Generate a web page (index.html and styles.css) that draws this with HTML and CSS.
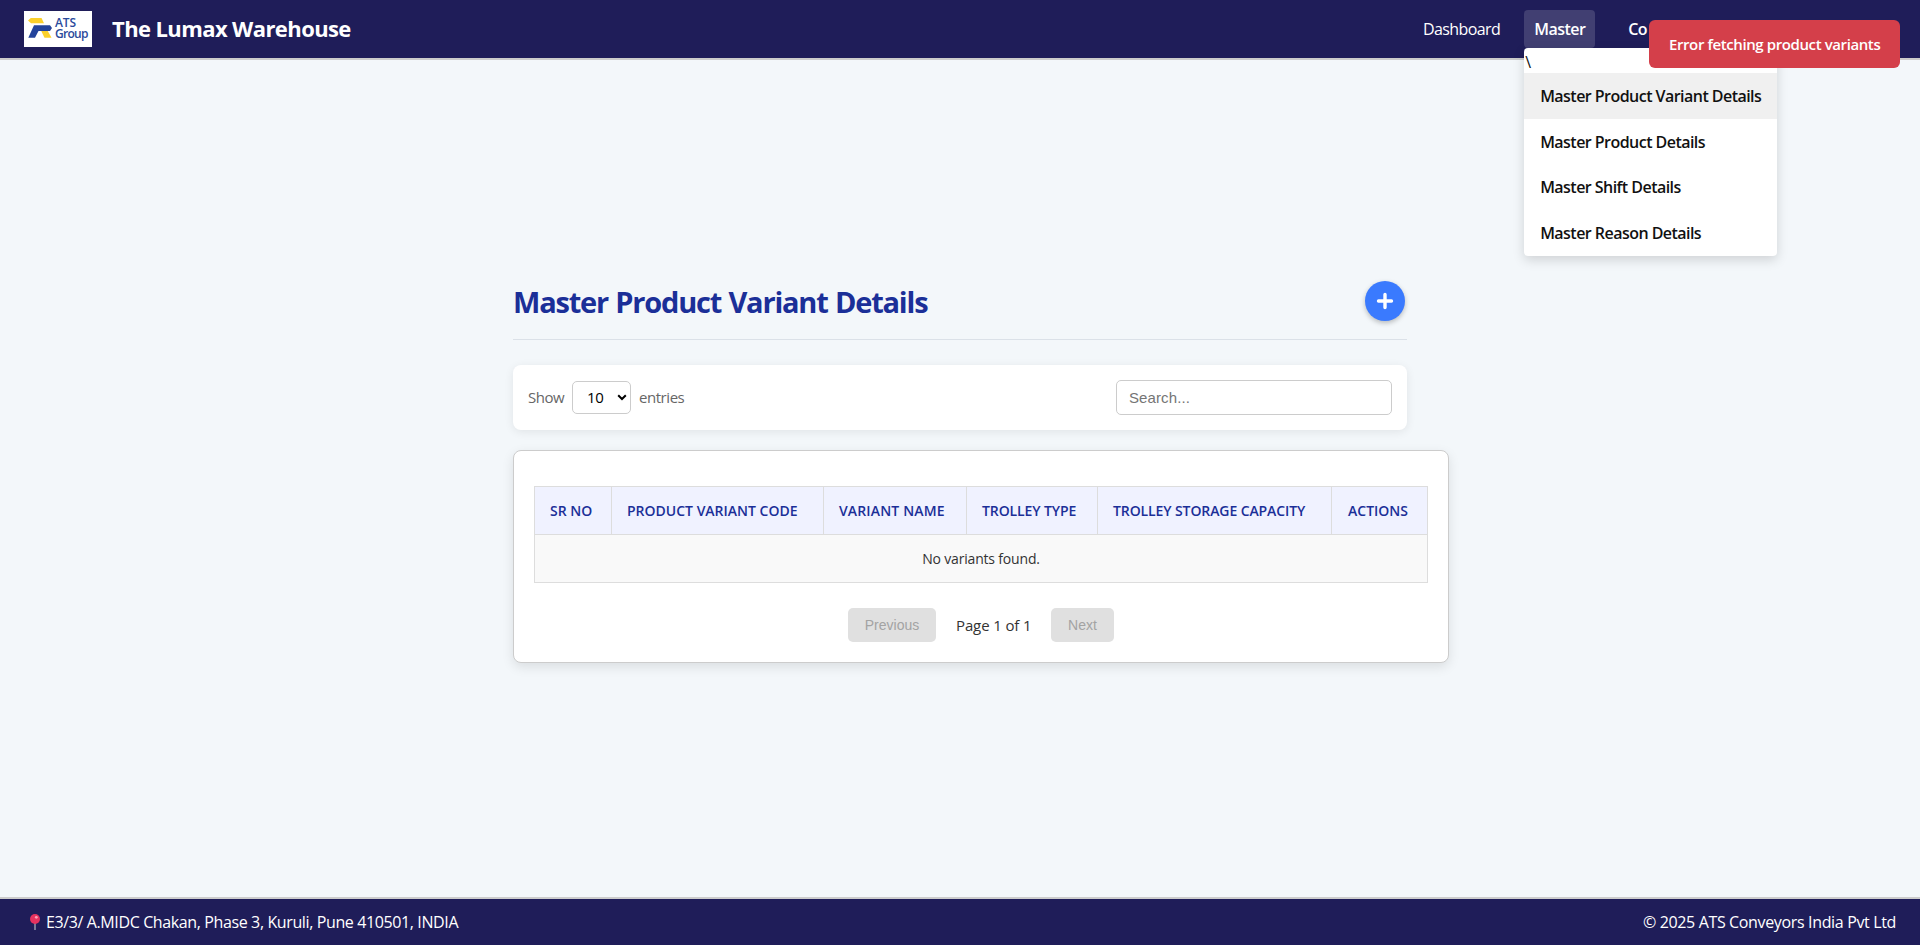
FILE: index.html
```html
<!DOCTYPE html>
<html lang="en">
<head>
<meta charset="utf-8">
<title>The Lumax Warehouse</title>
<link rel="stylesheet" href="styles.css">
</head>
<body>
<header class="header">
  <div class="brand">
    <svg class="logo" viewBox="0 0 68 36" width="68" height="36">
      <rect width="68" height="36" fill="#fff"/>
      <path d="M4 9.400 6.800 7h10.700l2.500 5.200H7z" fill="#fbd02b"/>
      <path d="M17 19.500h6.500l4 7.200h-7z" fill="#fbd02b"/>
      <path d="M4.300 26.700 10 14.300h16l2 2.700-2 3H14.500L11 26.700z" fill="#23439b"/>
      <text class="logo-text" x="31" y="16" textLength="21">ATS</text>
      <text class="logo-text" x="31" y="26.600" textLength="33.500">Group</text>
    </svg>
    <span class="brand-name">The Lumax Warehouse</span>
  </div>
  <nav class="nav">
    <a class="nav-link">Dashboard</a>
    <div class="nav-item">
      <a class="nav-link nav-active">Master</a>
      <div class="menu">
        <span class="menu-stray">\</span>
        <a class="menu-item menu-current">Master Product Variant Details</a>
        <a class="menu-item">Master Product Details</a>
        <a class="menu-item">Master Shift Details</a>
        <a class="menu-item">Master Reason Details</a>
      </div>
    </div>
    <a class="nav-link nav-strong">Co</a>
  </nav>
</header>
<div class="toast">Error fetching product variants</div>
<main class="main">
  <div class="content">
    <div class="title-row">
      <h1 class="title">Master Product Variant Details</h1>
      <button class="add" aria-label="Add">
        <svg width="18" height="18" viewBox="0 0 18 18"><path d="M9 2.500v13M2.500 9h13" stroke="#fff" stroke-width="3.400" stroke-linecap="round"/></svg>
      </button>
    </div>
    <div class="controls">
      <label class="entries"><span class="entries-show">Show</span>
        <span class="select"><span class="entries-text">10</span><svg width="10" height="7" viewBox="0 0 10 7"><path d="M1.200 1.200 5 5l3.800-3.800" fill="none" stroke="#000" stroke-width="2"/></svg></span>
        <span class="entries-text">entries</span></label>
      <input class="search" type="text" placeholder="Search...">
    </div>
    <section class="card">
      <table class="table">
        <colgroup><col class="c1"><col class="c2"><col class="c3"><col class="c4"><col class="c5"><col class="c6"></colgroup>
        <thead><tr>
          <th>SR NO</th><th>PRODUCT VARIANT CODE</th><th class="th-name">VARIANT NAME</th>
          <th class="th-tight">TROLLEY TYPE</th><th class="th-tight">TROLLEY STORAGE CAPACITY</th><th class="th-actions">ACTIONS</th>
        </tr></thead>
        <tbody><tr><td colspan="6">No variants found.</td></tr></tbody>
      </table>
      <div class="pager">
        <button class="page-btn page-prev" disabled>Previous</button>
        <span class="page-label">Page 1 of 1</span>
        <button class="page-btn page-next" disabled>Next</button>
      </div>
    </section>
  </div>
</main>
<footer class="footer">
  <div class="address"><svg class="pin" width="10" height="17" viewBox="0 0 10 17"><path d="M5 9v7" stroke="#8d93a8" stroke-width="1.600"/><circle cx="5" cy="5" r="5" fill="#e5325f"/><circle cx="6.300" cy="3.300" r="1.400" fill="#ff9fb4"/></svg><span>E3/3/ A.MIDC Chakan, Phase 3, Kuruli, Pune 410501, INDIA</span></div>
  <span class="copyright">© 2025 ATS Conveyors India Pvt Ltd</span>
</footer>
</body>
</html>
```
FILE: styles.css
```css
* { box-sizing: border-box; }
body { margin: 0; height: 945px; display: flex; flex-direction: column; background: #f3f7fa; color: #333; font-family: "Open Sans", "Noto Sans", sans-serif; font-size: 16px; white-space: nowrap; overflow: hidden; }
.header { height: 60px; flex: none; display: flex; justify-content: space-between; background: #1f1d59; border-bottom: 2px solid #ccc; color: #fff; padding-left: 24px; }
.brand { display: flex; align-items: center; gap: 20px; }
.logo { display: block; }
.logo-text { font: 600 12px "Open Sans", sans-serif; fill: #2b4a9b; }
.brand-name { font-size: 22px; line-height: 28px; padding-bottom: 3px; font-weight: 700; letter-spacing: -.6px; }
.nav { display: flex; width: 507px; padding-top: 10px; gap: 14px; letter-spacing: -.6px; }
.nav-link { display: flex; align-items: center; height: 38px; padding: 0 10px; border-radius: 4px; }
.nav-item { position: relative; margin-right: 9px; }
.nav-active { width: 71px; background: #413f72; font-weight: 600; letter-spacing: -.5px; }
.nav-strong { font-weight: 600; }
.menu { position: absolute; z-index: 2; left: 0; top: 38px; width: 253px; height: 208px; display: flex; flex-direction: column; background: #fff; color: #111; border-radius: 4px; box-shadow: 0 4px 12px rgba(0,0,0,.15); letter-spacing: -.54px; }
.menu-stray { height: 25px; line-height: 28px; padding-left: 1px; }
.menu-item { flex: 1; display: flex; align-items: center; padding-left: 16px; font-weight: 600; }
.menu-current { background: #f0f0f0; }
.toast { position: absolute; z-index: 3; left: 1649px; top: 20px; width: 251px; height: 48px; display: flex; align-items: center; padding-left: 20px; border-radius: 6px; background: #d43f4a; color: #fff; font-size: 15px; font-weight: 600; letter-spacing: -.4px; }
.main { flex: 1; display: flex; justify-content: center; padding-top: 219px; }
.content { width: 894px; }
.title-row { height: 61px; display: flex; justify-content: space-between; align-items: flex-start; padding: 2px 2px 0 0; border-bottom: 1px solid #dbe1e8; }
.title { margin: 0; font-size: 29px; line-height: 42px; font-weight: 700; letter-spacing: -1.200px; word-spacing: 1px; color: #1b2f98; }
.add { width: 40px; height: 40px; padding: 0; border: 0; border-radius: 50%; background: #3a7afe; display: flex; align-items: center; justify-content: center; box-shadow: 0 2px 5px rgba(0,0,0,.25); }
.controls { margin-top: 25px; height: 65px; display: flex; justify-content: space-between; align-items: center; padding: 0 15px; background: #fff; border-radius: 8px; box-shadow: 0 2px 10px rgba(0,0,0,.08); }
.entries { display: flex; align-items: center; gap: 8px; font-size: 15px; line-height: 20px; letter-spacing: -.45px; color: #666; }
.entries-show { width: 36px; padding-bottom: 2px; }
.entries-text { padding-bottom: 2px; }
.select { width: 59px; height: 33px; display: flex; align-items: center; justify-content: space-between; padding: 0 3px 0 14px; border: 1px solid #ccc; border-radius: 5px; color: #000; }
.search { width: 276px; height: 35px; border: 1px solid #ccc; border-radius: 5px; padding: 0 12px; font: 15px "Liberation Sans", Arial, sans-serif; letter-spacing: .1px; }
.card { margin-top: 20px; width: 936px; height: 213px; padding: 35px 20px 0; background: #fff; border: 1px solid #ccc; border-radius: 8px; box-shadow: 0 4px 12px rgba(0,0,0,.1); }
.table { width: 893px; table-layout: fixed; border-collapse: collapse; font-size: 14px; }
.c1 { width: 77px; } .c2 { width: 212px; } .c3 { width: 143px; } .c4 { width: 131px; } .c5 { width: 234px; } .c6 { width: 96px; }
th, td { height: 48px; padding: 0 15px; border: 1px solid #ddd; text-align: left; }
th { background: #f0f2ff; color: #1b2f98; font-weight: 600; }
.th-name { letter-spacing: .15px; }
.th-tight { letter-spacing: -.100px; }
.th-actions { padding-left: 16px; }
td { background: #f9f9f9; text-align: center; letter-spacing: -.18px; }
.pager { display: flex; margin: 25px 0 0 314px; height: 34px; align-items: center; }
.page-btn { height: 34px; padding: 0; border: 0; border-radius: 5px; background: #e0e0e0; color: #a3a3a3; font: 14px "Liberation Sans", Arial, sans-serif; }
.page-prev { width: 88px; } .page-next { width: 63px; }
.page-label { width: 115px; padding-left: 20px; font-size: 15px; letter-spacing: -.12px; }
.footer { height: 48px; flex: none; display: flex; align-items: center; justify-content: space-between; background: #1f1d59; border-top: 2px solid #ccc; color: #fff; padding: 0 24px 0 30px; letter-spacing: -.38px; }
.copyright { letter-spacing: -.35px; }
.address { display: flex; align-items: center; gap: 6px; }
```
